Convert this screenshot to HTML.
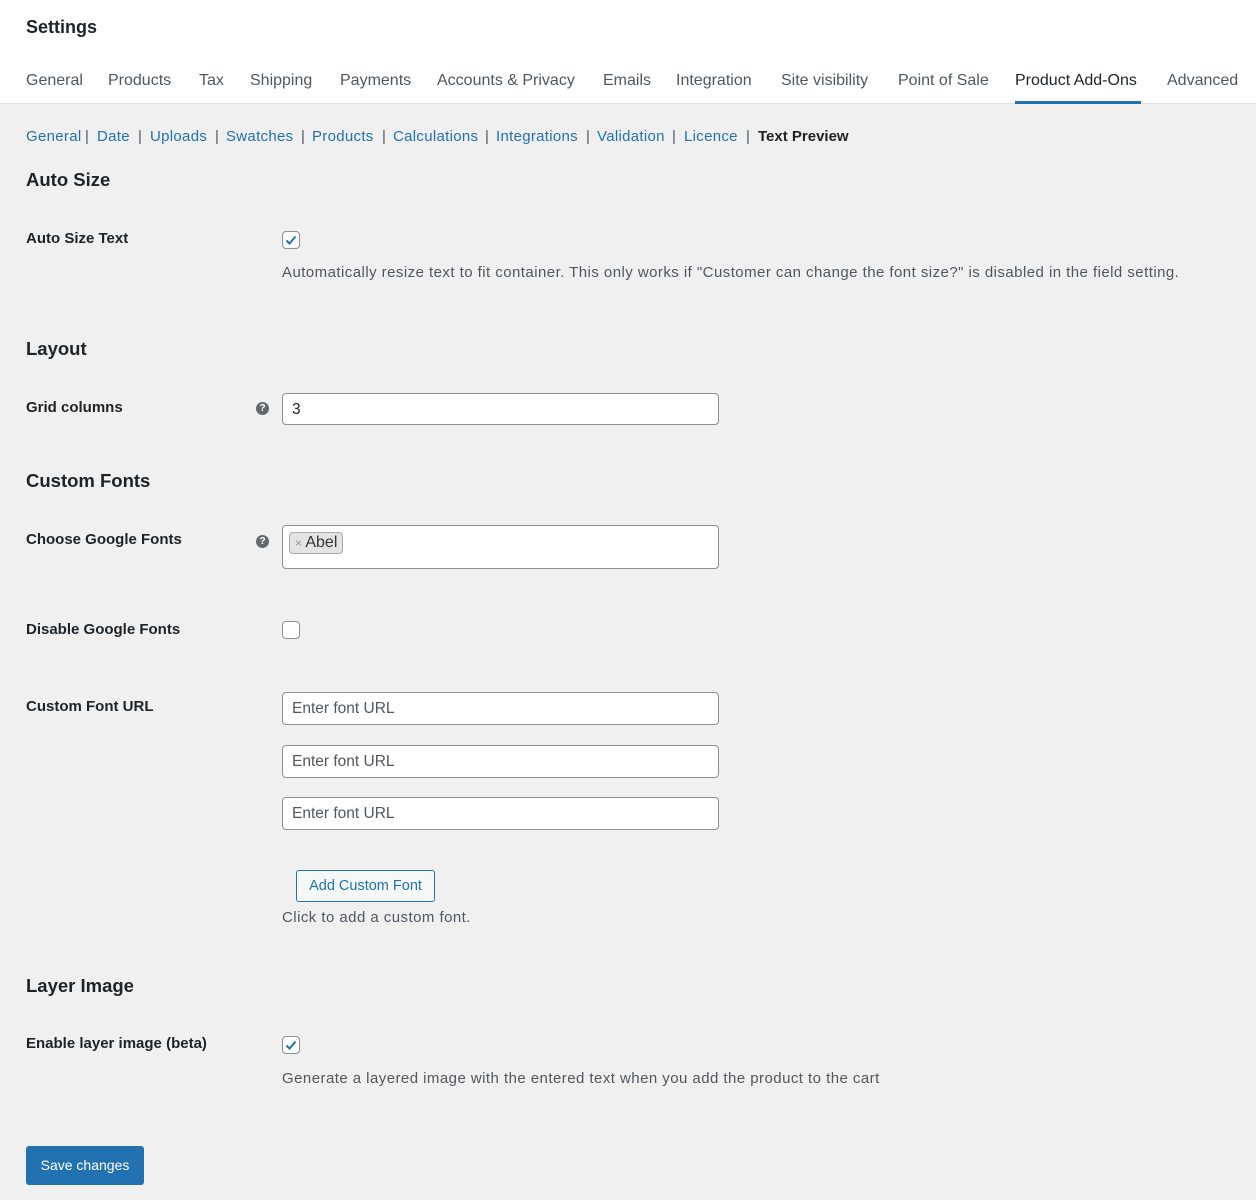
<!DOCTYPE html>
<html><head><meta charset="utf-8"><style>
*{margin:0;padding:0;box-sizing:border-box}
body{width:1256px;height:1200px;background:#f0f0f1;font-family:"Liberation Sans",sans-serif;color:#1d2327;position:relative;overflow:hidden}
.top{position:absolute;left:0;top:0;width:1256px;height:104px;background:#fff;border-bottom:1px solid #e2e2e2}
.a{position:absolute;white-space:nowrap}
.tab{font-size:16px;color:#50575e;top:72px}
.s{position:absolute;top:128px;font-size:15px;letter-spacing:0.3px;color:#2271b1;white-space:nowrap}
.p{position:absolute;top:128px;font-size:15px;color:#50575e}
.h{font-size:18.5px;font-weight:600}
.lbl{font-size:15px;font-weight:600}
.desc{font-size:15px;color:#50575e;letter-spacing:0.45px}
.inp{position:absolute;left:282px;width:437px;height:33px;background:#fff;border:1px solid #8c8f94;border-radius:4px;font-size:15.5px;color:#50575e;padding:7px 9px}
.cb{position:absolute;left:282px;width:18px;height:18px;border:1px solid #8c8f94;border-radius:4px;background:#fff}
.help{position:absolute;left:256px;width:13px;height:13px;border-radius:50%;background:#646970;color:#fff;font-size:10px;font-weight:bold;text-align:center;line-height:13px}
</style></head><body>
<div class="top"></div>
<div class="a" style="left:26px;top:17px;font-size:18px;font-weight:600">Settings</div>
<div class="a tab" style="left:26px">General</div>
<div class="a tab" style="left:108px">Products</div>
<div class="a tab" style="left:199px">Tax</div>
<div class="a tab" style="left:250px">Shipping</div>
<div class="a tab" style="left:340px">Payments</div>
<div class="a tab" style="left:437px">Accounts &amp; Privacy</div>
<div class="a tab" style="left:603px">Emails</div>
<div class="a tab" style="left:676px">Integration</div>
<div class="a tab" style="left:781px">Site visibility</div>
<div class="a tab" style="left:898px">Point of Sale</div>
<div class="a tab" style="left:1015px;color:#1d2327">Product Add-Ons</div>
<div class="a" style="left:1015px;top:101px;width:126px;height:3px;background:#2271b1"></div>
<div class="a tab" style="left:1167px">Advanced</div>

<div class="s" style="left:26px">General</div><div class="p" style="left:85px">|</div>
<div class="s" style="left:97px">Date</div><div class="p" style="left:138px">|</div>
<div class="s" style="left:150px">Uploads</div><div class="p" style="left:215px">|</div>
<div class="s" style="left:226px">Swatches</div><div class="p" style="left:301px">|</div>
<div class="s" style="left:312px">Products</div><div class="p" style="left:382px">|</div>
<div class="s" style="left:393px">Calculations</div><div class="p" style="left:485px">|</div>
<div class="s" style="left:496px">Integrations</div><div class="p" style="left:586px">|</div>
<div class="s" style="left:597px">Validation</div><div class="p" style="left:672px">|</div>
<div class="s" style="left:684px">Licence</div><div class="p" style="left:746px">|</div>
<div class="s" style="left:758px;color:#1d2327;font-weight:bold;letter-spacing:0">Text Preview</div>

<div class="a h" style="left:26px;top:169px">Auto Size</div>
<div class="a lbl" style="left:26px;top:230px">Auto Size Text</div>
<div class="cb" style="top:231px"><svg width="16" height="16" viewBox="0 0 16 16"><path d="M3.5 8.5l3 3 6-7" stroke="#2271b1" stroke-width="2" fill="none"/></svg></div>
<div class="a desc" style="left:282px;top:264px">Automatically resize text to fit container. This only works if "Customer can change the font size?" is disabled in the field setting.</div>

<div class="a h" style="left:26px;top:338px">Layout</div>
<div class="a lbl" style="left:26px;top:399px">Grid columns</div>
<div class="help" style="top:402px">?</div>
<div class="inp" style="top:393px;height:32px;color:#1d2327">3</div>

<div class="a h" style="left:26px;top:470px">Custom Fonts</div>
<div class="a lbl" style="left:26px;top:531px">Choose Google Fonts</div>
<div class="help" style="top:535px">?</div>
<div class="inp" style="top:525px;height:44px;padding:6px"><span style="display:inline-block;background:#e4e4e4;border:1px solid #aaa;border-radius:4px;padding:1px 5px;color:#333;font-size:16px"><span style="color:#999;font-size:12px">× </span>Abel</span></div>

<div class="a lbl" style="left:26px;top:621px">Disable Google Fonts</div>
<div class="cb" style="top:621px"></div>

<div class="a lbl" style="left:26px;top:698px">Custom Font URL</div>
<div class="inp" style="top:692px">Enter font URL</div>
<div class="inp" style="top:745px">Enter font URL</div>
<div class="inp" style="top:797px">Enter font URL</div>
<div class="a" style="left:296px;top:870px;width:139px;height:32px;border:1px solid #2271b1;border-radius:3px;background:#f6f7f7;color:#2271b1;font-size:14.5px;text-align:center;line-height:30px">Add Custom Font</div>
<div class="a desc" style="left:282px;top:909px">Click to add a custom font.</div>

<div class="a h" style="left:26px;top:975px">Layer Image</div>
<div class="a lbl" style="left:26px;top:1035px">Enable layer image (beta)</div>
<div class="cb" style="top:1036px"><svg width="16" height="16" viewBox="0 0 16 16"><path d="M3.5 8.5l3 3 6-7" stroke="#2271b1" stroke-width="2" fill="none"/></svg></div>
<div class="a desc" style="left:282px;top:1070px">Generate a layered image with the entered text when you add the product to the cart</div>

<div class="a" style="left:26px;top:1146px;width:118px;height:39px;background:#2271b1;border-radius:3px;color:#fff;font-size:14px;text-align:center;line-height:39px">Save changes</div>
</body></html>
